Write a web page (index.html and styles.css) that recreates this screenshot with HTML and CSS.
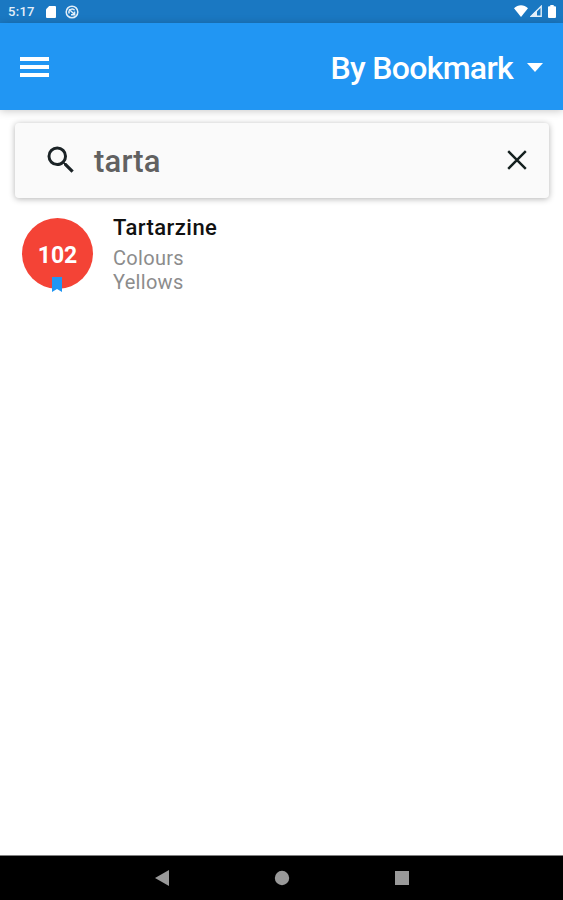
FILE: index.html
```html
<!DOCTYPE html>
<html lang="en">
<head>
  <meta charset="UTF-8">
  <meta name="viewport" content="width=device-width, initial-scale=1.0">
  <title>By Bookmark</title>
  <link rel="stylesheet" href="styles.css">
</head>
<body>
  <div class="status-bar">
    <span class="clock">5:17</span>
    <svg class="sd-icon" viewBox="0 0 10 12"><path d="M3.2 0H9a1 1 0 0 1 1 1v10a1 1 0 0 1-1 1H1a1 1 0 0 1-1-1V3.2z" fill="#fff"/></svg>
    <svg class="sync-icon" viewBox="0 0 14 14" fill="none" stroke="#e3eff9"><circle cx="7" cy="7" r="5.8" stroke-width="1.5"/><path d="M4.2 8.5A3.2 3.2 0 0 1 9.6 5.2M4 4.2l6.2 5.8M6 9.8h3.6V6.5" stroke-width="1.4"/></svg>
    <div class="status-right">
      <svg class="wifi-icon" viewBox="0 0 14 12"><path d="M0 3.2C4-.8 10-.8 14 3.2L7 12z" fill="#fff"/></svg>
      <svg class="signal-icon" viewBox="0 0 12 12"><path d="M1.2 11.3L11.2 1.3v10z" fill="none" stroke="#e3eff9" stroke-width="1.4"/><path d="M0 12l7-7v7z" fill="#e3eff9"/></svg>
      <svg class="battery-icon" viewBox="0 0 8 13"><path d="M2.3 0h3.4v1.3H7a1 1 0 0 1 1 1V12a1 1 0 0 1-1 1H1a1 1 0 0 1-1-1V2.3a1 1 0 0 1 1-1h1.3z" fill="#fff"/></svg>
    </div>
  </div>

  <div class="app-bar">
    <svg class="menu-icon" viewBox="0 0 29 20"><path d="M0 0h29v4H0zM0 8h29v4H0zM0 16h29v4H0z" fill="#fff"/></svg>
    <h1>By Bookmark</h1>
    <svg class="arrow-icon" viewBox="0 0 16 9"><path d="M0 0h16L8 9z" fill="#fff"/></svg>
  </div>

  <div class="content">
    <div class="search-card">
      <svg class="search-icon" viewBox="0 0 24 24"><path d="M15.5 14h-.79l-.28-.27A6.471 6.471 0 0 0 16 9.5 6.5 6.5 0 1 0 9.5 16c1.61 0 3.09-.59 4.23-1.57l.27.28v.79l5 4.99L20.49 19l-4.99-5zm-6 0C7.01 14 5 11.99 5 9.5S7.01 5 9.5 5 14 7.01 14 9.5 11.99 14 9.5 14z" fill="#1b2326"/></svg>
      <span class="search-text">tarta</span>
      <svg class="close-icon" viewBox="0 0 20 20"><path d="M1.2 1.2l17.6 17.6M18.8 1.2L1.2 18.8" stroke="#14201f" stroke-width="2.4"/></svg>
    </div>

    <div class="item">
      <div class="avatar">
        <span>102</span>
        <svg class="bookmark-icon" viewBox="0 0 10 15"><path d="M0 0h10v15l-5-3-5 3z" fill="#2196f3"/></svg>
      </div>
      <div class="details">
        <div class="name">Tartarzine</div>
        <div class="sub">Colours</div>
        <div class="sub">Yellows</div>
      </div>
    </div>
  </div>

  <div class="nav-bar">
    <svg class="nav-icon" viewBox="0 0 16 16"><path d="M15 0v16L1 8z" fill="#999"/></svg>
    <svg class="nav-icon" viewBox="0 0 16 16"><circle cx="8" cy="8" r="7.2" fill="#999"/></svg>
    <svg class="nav-icon" viewBox="0 0 16 16"><path d="M1 1h14v14H1z" fill="#999"/></svg>
  </div>
</body>
</html>
```
FILE: styles.css
```css
body {
  font-family: Roboto, sans-serif;
  margin: 0;
  height: 900px;
  display: flex;
  flex-direction: column;
  background-color: #fff;
  overflow: hidden;
}

svg {
  display: block;
  flex: none;
}

.status-bar {
  height: 23px;
  display: flex;
  align-items: center;
  padding: 0 7px 0 8px;
  box-sizing: border-box;
  background-color: #1a78c2;
  color: #e3eff9;
}

.clock {
  width: 38px;
  font-size: 13px;
  font-weight: 500;
  letter-spacing: 0.3px;
  line-height: 23px;
}

.sd-icon {
  width: 10px;
  height: 12px;
}

.sync-icon {
  width: 14px;
  height: 14px;
  margin-left: 9px;
}

.status-right {
  display: flex;
  margin-left: auto;
}

.wifi-icon {
  width: 14px;
  height: 12px;
}

.signal-icon {
  width: 12px;
  height: 12px;
  margin: 0 6px 0 2px;
}

.battery-icon {
  width: 8px;
  height: 13px;
}

.app-bar {
  position: relative;
  height: 87px;
  display: flex;
  align-items: center;
  box-sizing: border-box;
  padding: 2px 20px 0;
  background-color: #2196f3;
  color: #fff;
  box-shadow: 0 1px 8px rgba(0, 0, 0, 0.22);
}

.menu-icon {
  width: 29px;
  height: 20px;
  margin-bottom: 1px;
}

.app-bar h1 {
  margin: 0 14px 0 auto;
  font-size: 32px;
  font-weight: 500;
  letter-spacing: -0.7px;
  line-height: 40px;
  padding-top: 1px;
}

.arrow-icon {
  width: 16px;
  height: 9px;
  margin-bottom: 1px;
}

.content {
  flex: 1;
  padding: 13px 14px 0 15px;
}

.search-card {
  height: 75px;
  display: flex;
  align-items: center;
  box-sizing: border-box;
  padding: 0 22px 1px 28px;
  background-color: #fafafa;
  border-radius: 4px;
  box-shadow: 0 1px 6px rgba(0, 0, 0, 0.3);
}

.search-icon {
  width: 36px;
  height: 36px;
}

.search-text {
  margin-left: 15px;
  padding-top: 3px;
  font-size: 31px;
  font-weight: 500;
  letter-spacing: 0.2px;
  line-height: 40px;
  color: #616161;
}

.close-icon {
  width: 20px;
  height: 20px;
  margin-left: auto;
}

.item {
  display: flex;
  padding: 16px 0 0 6px;
}

.avatar {
  position: relative;
  width: 71px;
  height: 71px;
  margin: 4px 0 0 1px;
  border-radius: 50%;
  background-color: #f44336;
  color: #fff;
  font-size: 23px;
  font-weight: 700;
  line-height: 75px;
  text-align: center;
}

.bookmark-icon {
  position: absolute;
  left: 30px;
  bottom: -3px;
  width: 10px;
  height: 15px;
}

.details {
  margin-left: 20px;
}

.name {
  font-size: 22px;
  font-weight: 500;
  letter-spacing: 0.45px;
  line-height: 28px;
  margin-bottom: 4px;
  color: #111;
}

.sub {
  font-size: 20px;
  letter-spacing: 0.3px;
  line-height: 24px;
  color: #8c8c8c;
}

.nav-bar {
  height: 45px;
  display: flex;
  align-items: center;
  justify-content: center;
  gap: 104px;
  box-sizing: border-box;
  border-top: 1px solid #808080;
  background-color: #000;
}

.nav-icon {
  width: 16px;
  height: 16px;
}
```
